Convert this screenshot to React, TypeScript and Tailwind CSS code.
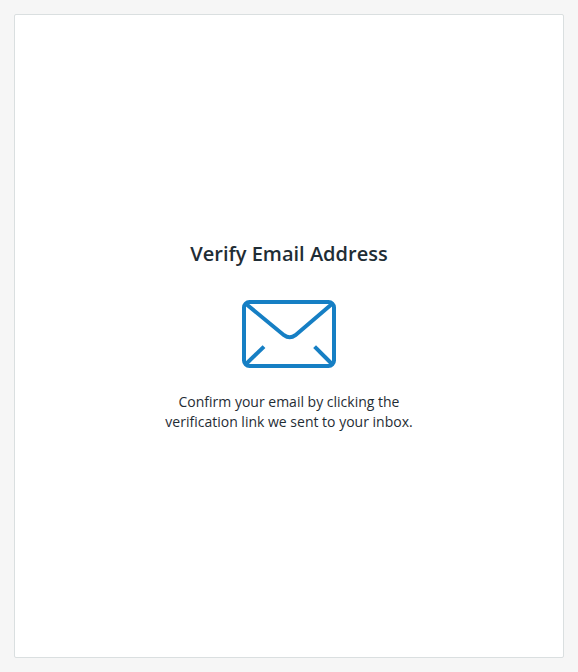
import React from 'react';

const EnvelopeIcon: React.FC<{ className?: string }> = ({ className }) => (
    <svg
        className={className}
        viewBox="0 0 94 68"
        fill="none"
        stroke="currentColor"
        strokeWidth="4"
        aria-hidden="true"
    >
        <rect x="2" y="2" width="90" height="64" rx="5.5" />
        <path d="M3.5 3.5 L42 35.2 Q47.7 39.4 53.4 35.2 L90.5 3.5" />
        <path d="M3.5 64.5 L22 46.6" />
        <path d="M90.5 64.5 L72.6 46.6" />
    </svg>
);

const App: React.FC = () => {
    return (
        <div className="min-h-screen bg-[#f6f6f6] p-3.5 flex font-['Open_Sans',sans-serif] text-[#1f2d35]">
            <main className="flex-1 flex flex-col items-center bg-white border border-[#dadfe0] rounded-xs pt-[225px]">
                <h1 className="text-xl leading-7 font-semibold">Verify Email Address</h1>
                <EnvelopeIcon className="w-[94px] h-[68px] mt-8 text-[#167fc4]" />
                <p className="mt-6 text-sm leading-5 text-center">
                    Confirm your email by clicking the
                    <br />
                    verification link we sent to your inbox.
                </p>
            </main>
        </div>
    );
};

export default App;
